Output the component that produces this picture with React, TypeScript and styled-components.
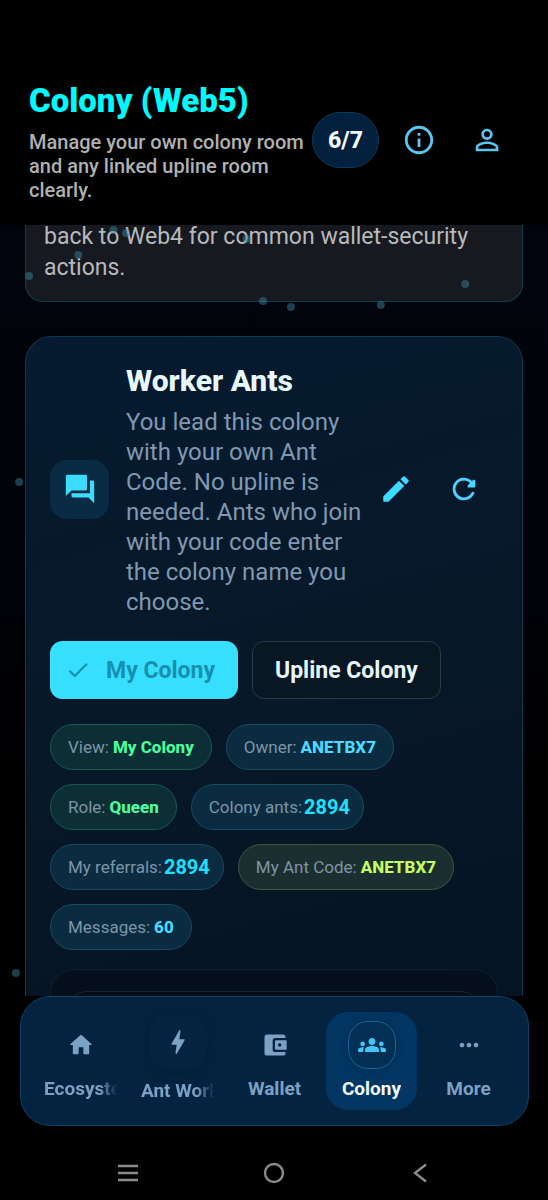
import React from "react";
import styled, { createGlobalStyle, css } from "styled-components";
import { MdCheck, MdForum, MdGroups, MdInfoOutline, MdMoreHoriz, MdPersonOutline } from "react-icons/md";

const GlobalStyle = createGlobalStyle`
  * { box-sizing: border-box; }
  html, body { margin: 0; background: #000; }
  body { font-family: Roboto, "Liberation Sans", sans-serif; color: #e6f6ff; }
  button { font: inherit; color: inherit; background: none; border: 0; padding: 0; margin: 0; cursor: pointer; }
  h1, h2, p, dl, dt, dd { margin: 0; padding: 0; }
`;

const Shell = styled.div`
  height: 100vh;
  display: flex;
  flex-direction: column;
  overflow: hidden;
  background: #000;
`;

const Header = styled.header`
  flex: none;
  display: flex;
  align-items: flex-start;
  padding: 81px 27px 23px 29px;
`;

const HeaderText = styled.div`
  flex: 1;
  min-width: 0;
`;

const Title = styled.h1`
  font-size: 33px;
  line-height: 40px;
  font-weight: 900;
  color: #00fbff;
  margin-bottom: 9px;
`;

const Subtitle = styled.p`
  font-size: 20px;
  line-height: 24px;
  font-weight: 500;
  color: #b0b0b0;
`;

const HeaderActions = styled.div`
  display: flex;
  align-items: center;
  margin-top: 31px;
`;

const LevelBadge = styled.span`
  width: 67px;
  height: 56px;
  display: grid;
  place-items: center;
  margin-right: 6px;
  border: 1px solid #0f3a58;
  border-radius: 28px;
  background: #03203f;
  color: #f2fbff;
  font-size: 23px;
  font-weight: 800;
`;

const IconButton = styled.button<{ $tone?: string }>`
  width: 68px;
  height: 56px;
  display: grid;
  place-items: center;
  color: ${(p) => p.$tone ?? "#5cc4f2"};
`;

const Content = styled.main`
  position: relative;
  flex: 1;
  min-height: 0;
  overflow: hidden;
  padding: 0 25px;
  background: linear-gradient(#01040c, #01030a 40%, #000 75%);
`;

const Particles = styled.svg`
  position: absolute;
  inset: 0;
  width: 100%;
  height: 100%;
  pointer-events: none;
`;

const NoticeCard = styled.section`
  padding: 0 18px 18px;
  border: 1px solid #0c4049;
  border-top: 0;
  border-radius: 0 0 18px 18px;
  background: #16191f;
  color: #b8b9bc;
  font-size: 23px;
  line-height: 31px;
  margin-bottom: 34px;
`;

const NoticeText = styled.p`
  margin-top: -4px;
`;

const ColonyCard = styled.section`
  padding: 24px 24px 40px;
  border: 1px solid #12394e;
  border-radius: 26px;
  background: linear-gradient(165deg, #061b31, #071828 45%, #041221);
`;

const ColonyHead = styled.div`
  display: flex;
  align-items: center;
`;

const ForumTile = styled.span`
  flex: none;
  width: 59px;
  height: 59px;
  display: grid;
  place-items: center;
  margin-right: 17px;
  border-radius: 17px;
  background: #092c44;
  color: #3bdcff;
`;

const ColonyIntro = styled.div`
  flex: 1;
  min-width: 0;
`;

const ColonyName = styled.h2`
  font-size: 30px;
  line-height: 40px;
  font-weight: 800;
  color: #e8f8ff;
  margin-bottom: 6px;
`;

const ColonyText = styled.p`
  font-size: 24px;
  line-height: 30px;
  color: #8098b0;
`;

const Tabs = styled.div`
  display: flex;
  gap: 14px;
  margin: 24px 0 25px;
`;

const Tab = styled.button<{ $active?: boolean }>`
  height: 58px;
  display: flex;
  align-items: center;
  gap: 15px;
  padding: 0 22px;
  border: 1px solid #2a3a47;
  border-radius: 12px;
  background: #081722;
  color: #e6f6ff;
  font-size: 23px;
  font-weight: 700;
  white-space: nowrap;
  ${(p) =>
    p.$active &&
    css`
      padding-left: 14px;
      border-color: #37dfff;
      background: #37dfff;
      color: #178fae;
    `}
`;

type Tone = "green" | "cyan" | "lime";

const tones: Record<Tone, { back: string; line: string; text: string }> = {
  green: { back: "#0c2f36", line: "#1a5850", text: "#4dfb9c" },
  cyan: { back: "#0a2b40", line: "#1a4a60", text: "#4adcff" },
  lime: { back: "#1c2f30", line: "#42553f", text: "#c3fb62" },
};

const Chips = styled.dl`
  display: flex;
  flex-wrap: wrap;
  gap: 14px;
  margin-bottom: 19px;
`;

const Chip = styled.div<{ $tone: Tone; $large?: boolean }>`
  height: 46px;
  display: flex;
  align-items: center;
  gap: ${(p) => (p.$large ? 2 : 4)}px;
  padding: 0 ${(p) => (p.$large ? 13 : 17)}px 0 17px;
  border: 1px solid ${(p) => tones[p.$tone].line};
  border-radius: 23px;
  background: ${(p) => tones[p.$tone].back};
  font-size: 17px;
  white-space: nowrap;

  dt { color: #7e95a8; }
  dd {
    color: ${(p) => (p.$large ? "#1fe0fb" : tones[p.$tone].text)};
    font-size: ${(p) => (p.$large ? 20 : 17)}px;
    font-weight: ${(p) => (p.$large ? 700 : 800)};
  }
`;

const ChatPanel = styled.div`
  padding: 21px 16px;
  border: 1px solid #121f2d;
  border-radius: 24px;
  background: #050f1b;
`;

const ChatInner = styled.div`
  height: 80px;
  border: 1px solid #182434;
  border-radius: 20px;
  background: #050d18;
`;

const BottomNav = styled.nav`
  flex: none;
  display: flex;
  gap: 6px;
  margin: 0 19px 0 20px;
  padding: 15px 14px;
  border: 1px solid #0f4163;
  border-radius: 30px;
  background: #042340;
`;

const NavItem = styled.button<{ $active?: boolean; $raised?: boolean }>`
  flex: 1 1 0;
  min-width: 0;
  height: 98px;
  display: flex;
  flex-direction: column;
  align-items: center;
  justify-content: center;
  gap: 8px;
  padding: 0 9px ${(p) => (p.$raised ? 6 : 0)}px;
  border-radius: 22px;
  background: ${(p) => (p.$active ? "#033662" : "transparent")};
  color: ${(p) => (p.$active ? "#f2fbff" : "#7ba1c4")};
  font-size: 19px;
  font-weight: 700;
`;

const NavIcon = styled.span<{ $kind?: "active" | "raised" }>`
  flex: none;
  width: 48px;
  height: 48px;
  display: grid;
  place-items: center;
  border-radius: 20px;
  ${(p) =>
    p.$kind === "active" &&
    css`
      border: 1px solid #0d6a98;
      background: #042f55;
      box-shadow: 0 0 10px #052c50;
      color: #3fc8f5;
    `}
  ${(p) =>
    p.$kind === "raised" &&
    css`
      width: 58px;
      height: 58px;
      background: #042341;
      box-shadow: 0 2px 10px #031d37;
    `}
`;

const NavLabel = styled.span<{ $fade?: boolean }>`
  max-width: 100%;
  overflow: hidden;
  white-space: nowrap;
  line-height: 24px;
  ${(p) =>
    p.$fade &&
    css`
      width: 100%;
      text-align: left;
      mask-image: linear-gradient(to right, #000 76%, transparent);
    `}
`;

const SystemBar = styled.footer`
  flex: none;
  height: 74px;
  display: flex;
  justify-content: center;
  align-items: center;
  padding-top: 20px;
  gap: 98px;
`;

const SystemButton = styled.button`
  width: 48px;
  height: 48px;
  display: grid;
  place-items: center;
`;

const icons = {
  edit:
    "M3 17.46v3.04c0 .28.22.5.5.5h3.04c.13 0 .26-.05.35-.15L17.81 9.94l-3.75-3.75L3.15 17.1c-.1.1-.15.22-.15.36zM20.71 7.04c.39-.39.39-1.02 0-1.41l-2.34-2.34c-.39-.39-1.02-.39-1.41 0l-1.83 1.83 3.75 3.75 1.83-1.83z",
  refresh:
    "M17.65 6.35c-1.63-1.63-3.94-2.57-6.48-2.31-3.67.37-6.69 3.35-7.1 7.02C3.52 15.91 7.27 20 12 20c3.19 0 5.93-1.87 7.21-4.56.32-.67-.16-1.44-.9-1.44-.37 0-.72.2-.88.53-1.13 2.43-3.84 3.97-6.8 3.31-2.22-.49-4.01-2.3-4.48-4.52C5.31 9.44 8.26 6 12 6c1.66 0 3.14.69 4.22 1.78l-1.51 1.51c-.63.63-.19 1.71.7 1.71H19c.55 0 1-.45 1-1V6.41c0-.89-1.08-1.34-1.71-.71l-.64.65z",
  home:
    "M10 19v-5h4v5c0 .55.45 1 1 1h3c.55 0 1-.45 1-1v-7h1.7c.46 0 .68-.57.33-.87L12.67 3.6c-.38-.34-.96-.34-1.34 0l-8.36 7.53c-.34.3-.13.87.33.87H5v7c0 .55.45 1 1 1h3c.55 0 1-.45 1-1z",
  bolt:
    "M10.67 21c-.35 0-.62-.31-.57-.66L11 14H7.5c-.88 0-.33-.75-.31-.78 1.26-2.23 3.15-5.53 5.65-9.93.1-.18.3-.29.5-.29.35 0 .62.31.57.66l-.9 6.34h3.51c.4 0 .62.19.4.66-3.29 5.74-5.2 9.09-5.75 10.05-.1.18-.29.29-.5.29z",
  wallet:
    "M10 16V8c0-1.1.89-2 2-2h9V5c0-1.1-.9-2-2-2H5c-1.11 0-2 .9-2 2v14c0 1.1.89 2 2 2h14c1.1 0 2-.9 2-2v-1h-9c-1.11 0-2-.9-2-2zm3-8c-.55 0-1 .45-1 1v6c0 .55.45 1 1 1h9V8h-9zm3 5.5c-.83 0-1.5-.67-1.5-1.5s.67-1.5 1.5-1.5 1.5.67 1.5 1.5-.67 1.5-1.5 1.5z",
};

function Icon({ name, size }: { name: keyof typeof icons; size: number }) {
  return (
    <svg width={size} height={size} viewBox="0 0 24 24" fill="currentColor" aria-hidden="true">
      <path d={icons[name]} />
    </svg>
  );
}

const dots: [string, number][] = [
  ["20.7%", 5], ["23%", 8], ["45%", 14], ["14.3%", 30], ["5.3%", 51],
  ["84.9%", 59], ["48%", 76], ["53.1%", 82], ["69.5%", 80],
  ["3.5%", 257], ["2.9%", 748],
];

const chips: { label: string; value: string; tone: Tone; large?: boolean }[] = [
  { label: "View:", value: "My Colony", tone: "green" },
  { label: "Owner:", value: "ANETBX7", tone: "cyan" },
  { label: "Role:", value: "Queen", tone: "green" },
  { label: "Colony ants:", value: "2894", tone: "cyan", large: true },
  { label: "My referrals:", value: "2894", tone: "cyan", large: true },
  { label: "My Ant Code:", value: "ANETBX7", tone: "lime" },
  { label: "Messages:", value: "60", tone: "cyan" },
];

export default function App() {
  return (
    <Shell>
      <GlobalStyle />
      <Header>
        <HeaderText>
          <Title>Colony (Web5)</Title>
          <Subtitle>Manage your own colony room and any linked upline room clearly.</Subtitle>
        </HeaderText>
        <HeaderActions>
          <LevelBadge>6/7</LevelBadge>
          <IconButton aria-label="About this screen"><MdInfoOutline size={34} /></IconButton>
          <IconButton aria-label="Profile"><MdPersonOutline size={34} /></IconButton>
        </HeaderActions>
      </Header>

      <Content>
        <NoticeCard>
          <NoticeText>back to Web4 for common wallet-security actions.</NoticeText>
        </NoticeCard>

        <ColonyCard>
          <ColonyHead>
            <ForumTile><MdForum size={34} /></ForumTile>
            <ColonyIntro>
              <ColonyName>Worker Ants</ColonyName>
              <ColonyText>
                You lead this colony with your own Ant Code. No upline is needed. Ants who join
                with your code enter the colony name you choose.
              </ColonyText>
            </ColonyIntro>
            <IconButton $tone="#3bdcff" aria-label="Edit colony"><Icon name="edit" size={34} /></IconButton>
            <IconButton $tone="#4fd3fb" aria-label="Refresh"><Icon name="refresh" size={34} /></IconButton>
          </ColonyHead>

          <Tabs>
            <Tab $active aria-pressed="true"><MdCheck size={26} />My Colony</Tab>
            <Tab aria-pressed="false">Upline Colony</Tab>
          </Tabs>

          <Chips>
            {chips.map((c) => (
              <Chip key={c.label} $tone={c.tone} $large={c.large}>
                <dt>{c.label}</dt>
                <dd>{c.value}</dd>
              </Chip>
            ))}
          </Chips>

          <ChatPanel><ChatInner /></ChatPanel>
        </ColonyCard>

        <Particles aria-hidden="true">
          {dots.map(([x, y]) => (
            <circle key={x + y} cx={x} cy={y} r="4" fill="#3f8ba6" fillOpacity="0.45" />
          ))}
        </Particles>
      </Content>

      <BottomNav aria-label="Main">
        <NavItem><NavIcon><Icon name="home" size={28} /></NavIcon><NavLabel $fade>Ecosystem</NavLabel></NavItem>
        <NavItem $raised><NavIcon $kind="raised"><Icon name="bolt" size={32} /></NavIcon><NavLabel $fade>Ant Work</NavLabel></NavItem>
        <NavItem><NavIcon><Icon name="wallet" size={28} /></NavIcon><NavLabel>Wallet</NavLabel></NavItem>
        <NavItem $active aria-current="page"><NavIcon $kind="active"><MdGroups size={28} /></NavIcon><NavLabel>Colony</NavLabel></NavItem>
        <NavItem><NavIcon><MdMoreHoriz size={28} /></NavIcon><NavLabel>More</NavLabel></NavItem>
      </BottomNav>

      <SystemBar>
        <SystemButton aria-label="Recent apps">
          <svg width="20" height="18" stroke="#8a8a8a" strokeWidth="2.6"><path d="M0 2h20M0 9h20M0 16h20" /></svg>
        </SystemButton>
        <SystemButton aria-label="Home">
          <svg width="22" height="22" fill="none" stroke="#8a8a8a" strokeWidth="2.4"><circle cx="11" cy="11" r="9" /></svg>
        </SystemButton>
        <SystemButton aria-label="Back">
          <svg width="14" height="20" fill="none" stroke="#8a8a8a" strokeWidth="2.4"><path d="M13 1.5 2 10l11 8.5" /></svg>
        </SystemButton>
      </SystemBar>
    </Shell>
  );
}
